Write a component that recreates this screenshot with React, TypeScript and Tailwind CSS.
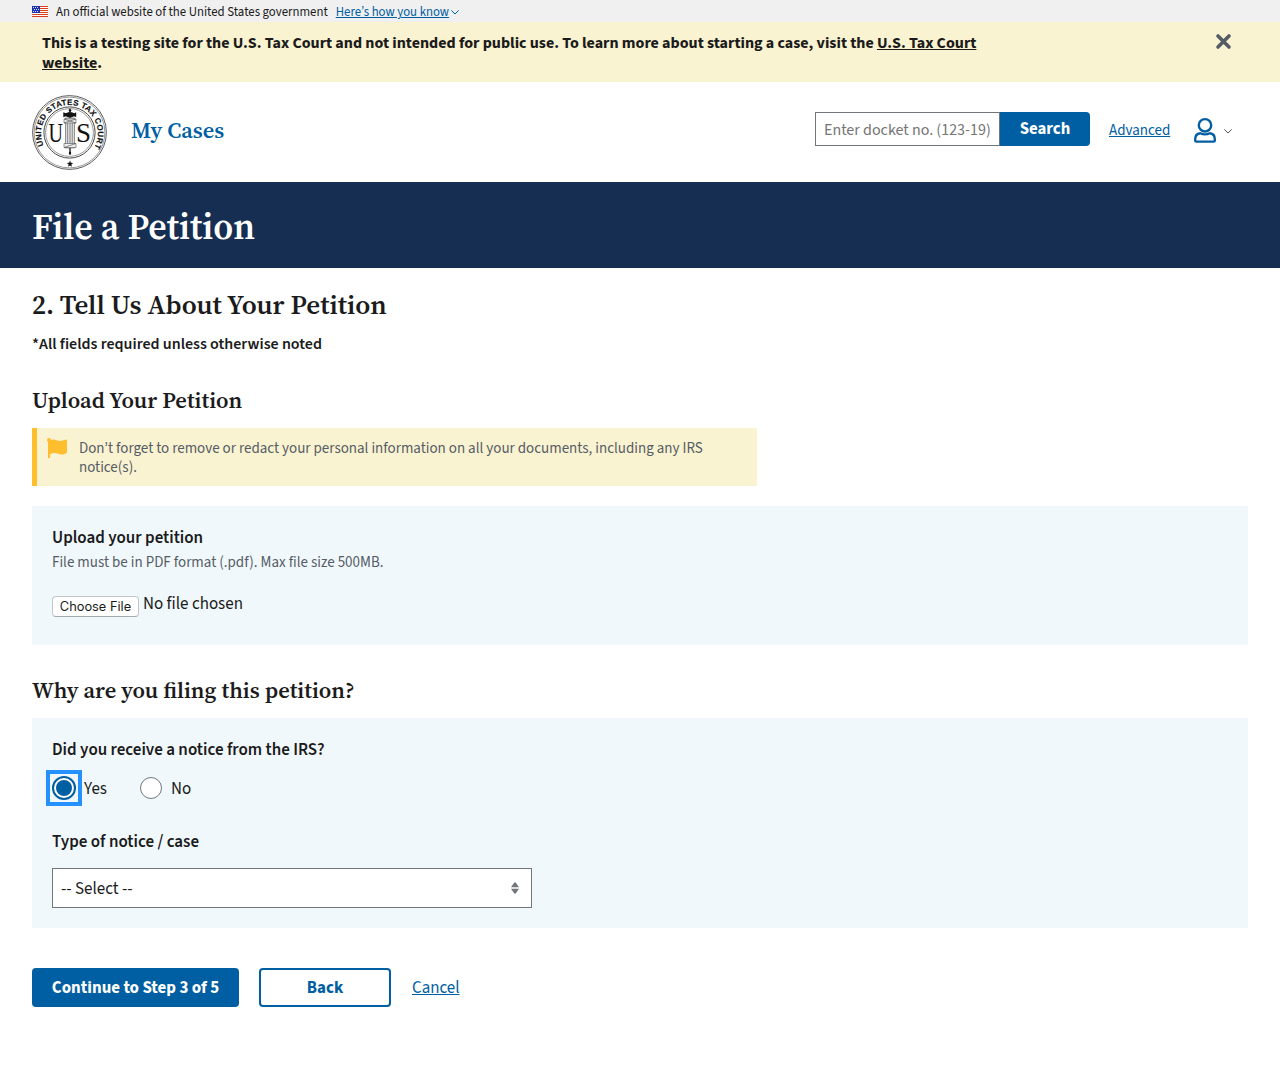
const sans = "font-['Source_Sans_3','Noto_Sans_CJK_KR','Open_Sans',sans-serif]";
const serif = "font-['Source_Serif_4','Noto_Serif_CJK_SC','Liberation_Serif',serif]";

function Flag() {
  return (
    <svg width="16" height="11" viewBox="0 0 16 11" className="block" shapeRendering="crispEdges">
      <rect width="16" height="11" fill="#fff" />
      {[0, 2, 4, 6, 8, 10].map((y) => (
        <rect key={y} y={y} width="16" height="1" fill="#db3e1f" />
      ))}
      <rect width="8" height="7" fill="#1e33b1" />
      {[[1, 1], [3, 1], [5, 1], [2, 3], [4, 3], [6, 3], [1, 5], [3, 5], [5, 5]].map(([x, y]) => (
        <rect key={`${x}-${y}`} x={x} y={y} width="1" height="1" fill="#d9dcf3" />
      ))}
    </svg>
  );
}

function Chevron({ color }: { color: string }) {
  return (
    <svg width="8" height="5" viewBox="0 0 8 5" fill="none" stroke={color} strokeWidth="1" strokeLinecap="round" strokeLinejoin="round">
      <path d="M0.6 0.7L4 4L7.4 0.7" />
    </svg>
  );
}

function Seal() {
  return (
    <svg width="76" height="76" viewBox="0 0 76 76" className="block">
      <g fill="none" stroke="#333">
        <circle cx="37.5" cy="37.5" r="36.9" strokeWidth="0.8" />
        <circle cx="37.5" cy="37.5" r="35.4" strokeWidth="0.5" />
        <circle cx="37.5" cy="37.5" r="25.6" strokeWidth="0.9" />
        <circle cx="37.5" cy="37.5" r="23.9" strokeWidth="0.5" />
      </g>
      <path id="seal-arc" d="M11.73 50.35A28.4 28.4 0 1 1 62.44 51.9" fill="none" />
      <text fontSize="8" fontWeight="700" fill="#111" stroke="#111" strokeWidth="0.15" fontFamily="Liberation Sans" letterSpacing="0.24">
        <textPath href="#seal-arc">UNITED STATES TAX COURT</textPath>
      </text>
      <g fontFamily="Liberation Serif" fontSize="27" fill="#111">
        <text x="16.5" y="46.7" textLength="14.5" lengthAdjust="spacingAndGlyphs">U</text>
        <text x="44" y="46.7" textLength="15" lengthAdjust="spacingAndGlyphs">S</text>
      </g>
      <path d="M38 13.7v46" stroke="#111" strokeWidth="1.3" />
      <rect x="33.4" y="23" width="9" height="30" fill="#ddd" stroke="#555" strokeWidth="0.6" />
      <path d="M35.6 26v25M38 26v25M40.3 26v25" stroke="#777" strokeWidth="0.8" />
      <path d="M32 24h12v4h-12zM32 48.5h12v4h-12z" fill="#eee" stroke="#555" strokeWidth="0.6" />
      <path d="M32 28L44 24M32 52.5L44 48.5M32 24l12 4" stroke="#444" strokeWidth="0.6" />
      <path d="M31.3 17.3l2.5 1 2.4-1h3.6l2.4 1 2-1v5l-2-1-2.4 1h-3.6l-2.4-1-2.5 1z" fill="#111" />
      <circle cx="38" cy="15.5" r="1.3" fill="#111" />
      <circle cx="38" cy="58" r="1.2" fill="#111" />
      <path d="M38 65.5l.85 2.3 2.35.1-1.85 1.5.65 2.3-2-1.3-2 1.3.65-2.3-1.85-1.5 2.35-.1z" fill="#111" />
    </svg>
  );
}

function Header() {
  return (
    <header className="flex h-[100px] items-start pl-8 pr-12">
      <div className="mt-[13px] w-[99px]"><Seal /></div>
      <a className={`${serif} mt-[35px] text-[22.4px] leading-[28px] font-semibold text-[#005ea2]`}>My Cases</a>
      <div className="ml-auto mt-[30px] flex">
        <div className="flex h-[34px] w-[185px] items-center border border-[#71767a] pt-[2px] pl-2 text-base whitespace-nowrap text-[#757575]">Enter docket no. (123-19)</div>
        <button className="h-[34px] w-[90px] rounded-r bg-[#005ea2] pt-px text-[16.8px] leading-none font-bold text-white">Search</button>
        <a className="ml-[19px] mt-[9px] w-[62px] text-[15px] leading-5 text-[#005ea2] underline">Advanced</a>
        <svg className="ml-[22px] mt-[5px]" width="24" height="27" viewBox="0 0 24 27" fill="none" stroke="#005ea2" strokeWidth="2.4">
          <circle cx="12" cy="8.3" r="6.2" />
          <path d="M7.2 16.2C4 16.5 2.2 19 2.2 22.2V23.4Q2.2 24.6 3.4 24.6H20.6Q21.8 24.6 21.8 23.4V22.2C21.8 19 20 16.5 16.8 16.2C13.8 17.7 10.2 17.7 7.2 16.2Z" strokeLinejoin="round" />
        </svg>
        <div className="ml-[7px] mt-[17px]"><Chevron color="#4b515b" /></div>
      </div>
    </header>
  );
}

export default function App() {
  return (
    <div className={`${sans} h-[1071px] w-[1280px] overflow-hidden bg-white text-[#1b1b1b]`}>
      <div className="flex h-[22px] items-center bg-[#f0f0f0] pl-8 text-[12.8px] leading-none">
        <Flag />
        <span className="ml-2 pt-[3px]">An official website of the United States government</span>
        <a className="ml-2 pt-[3px] text-[#005ea2] underline">Here’s how you know</a>
        <span className="ml-[2px] pt-[2px]"><Chevron color="#005ea2" /></span>
      </div>
      <div className="flex h-[60px] justify-between bg-[#faf3d1] pt-[11px] pl-[42px] text-base leading-5 font-bold">
        <p>
          This is a testing site for the U.S. Tax Court and not intended for public use. To learn more about starting a case, visit the <a className="underline">U.S. Tax Court</a>
          <br /><a className="underline">website</a>.
        </p>
        <svg className="mr-[48px]" width="17" height="17" viewBox="0 0 17 17" stroke="#565c65" strokeWidth="3.6" strokeLinecap="round"><path d="M3 3L14 14M14 3L3 14" /></svg>
      </div>
      <Header />
      <div className="h-[86px] bg-[#162e51] pl-8 pt-[23px]">
        <h1 className={`${serif} text-[35.9px] leading-[44px] font-semibold text-white`}>File a Petition</h1>
      </div>
      <main className="px-8 pt-[21px]">
        <h2 className={`${serif} text-[27px] leading-8 font-semibold`}>2. Tell Us About Your Petition</h2>
        <p className="mt-[13px] text-base leading-5 font-semibold">*All fields required unless otherwise noted</p>
        <h3 className={`${serif} mt-[33px] text-[22.5px] leading-7 font-semibold`}>Upload Your Petition</h3>
        <div className="mt-[13px] flex h-[58px] w-[725px] border-l-[5px] border-[#ffbe2e] bg-[#faf3d1] text-[15px] leading-[19px] text-[#565c65]">
          <svg className="mt-[10px] ml-[10px]" width="20" height="20" viewBox="0 0 20 20" fill="#ffbe2e">
            <circle cx="2" cy="2" r="2" /><path d="M1 2H3V20H1Z" /><path d="M3 2.6C7-.1 10 3.4 13 3.1C15.5 3 17 2 19 1.6Q20 1.6 20 2.6V14Q20 15 19 15.4C14 18 11 15 8 15C6 15 4.5 15.5 3 16.2Z" />
          </svg>
          <p className="mt-[11px] ml-[12px] whitespace-nowrap">Don’t forget to remove or redact your personal information on all your documents, including any IRS<br />notice(s).</p>
        </div>
        <section className="mt-5 h-[139px] bg-[#f0f8fc] pt-[22px] pl-5">
          <p className="text-[17px] leading-5 font-semibold">Upload your petition</p>
          <p className="mt-[5px] text-[15px] leading-5 text-[#565c65]">File must be in PDF format (.pdf). Max file size 500MB.</p>
          <div className="mt-[21px] flex">
            <button className="mt-[2px] h-[21px] w-[87px] rounded-[4px] border border-[#c3c7ca] border-b-[#a5a9ac] bg-white pt-px font-['Inter',sans-serif] text-[12.8px] leading-none">Choose File</button>
            <span className="ml-1 text-[17px] leading-5">No file chosen</span>
          </div>
        </section>
        <h3 className={`${serif} mt-[32px] text-[22.45px] leading-7 font-semibold`}>Why are you filing this petition?</h3>
        <section className="mt-[13px] h-[210px] bg-[#f0f8fc] pt-[22px] pl-5 text-[17px] leading-5">
          <p className="font-semibold">Did you receive a notice from the IRS?</p>
          <div className="mt-[10px] flex h-9 items-center">
            <span className="-ml-[6px] flex size-9 items-center justify-center border-4 border-[#2491ff]">
              <span className="flex size-6 items-center justify-center rounded-full border-2 border-[#005ea2] bg-white"><span className="size-4 rounded-full bg-[#005ea2]" /></span>
            </span>
            <span className="ml-[2px] w-[56px] pt-[2px]">Yes</span>
            <span className="size-[22px] rounded-full border border-[#71767a] bg-white" />
            <span className="ml-[9px] pt-[2px]">No</span>
          </div>
          <p className="mt-[26px] font-semibold">Type of notice / case</p>
          <div className="mt-[16px] flex h-10 w-[480px] items-center justify-between border border-[#71767a] bg-white pr-3 pl-2">
            <span className="pt-[2px]">-- Select --</span>
            <svg width="8" height="12" viewBox="0 0 8 12" fill="#71767a"><path d="M0 5.2L3.3 .5H4.7L8 5.2ZM0 6.8L3.3 11.5H4.7L8 6.8Z" /></svg>
          </div>
        </section>
        <div className="mt-10 flex h-[39px] items-center text-[16.95px]">
          <button className="h-[39px] w-[207px] rounded bg-[#005ea2] pt-[2px] leading-none font-bold text-white">Continue to Step 3 of 5</button>
          <button className="ml-5 h-[39px] w-[132px] rounded border-2 border-[#005ea2] pt-[2px] leading-none font-bold text-[#005ea2]">Back</button>
          <a className="ml-[21px] pt-[2px] text-[#005ea2] underline">Cancel</a>
        </div>
      </main>
    </div>
  );
}
